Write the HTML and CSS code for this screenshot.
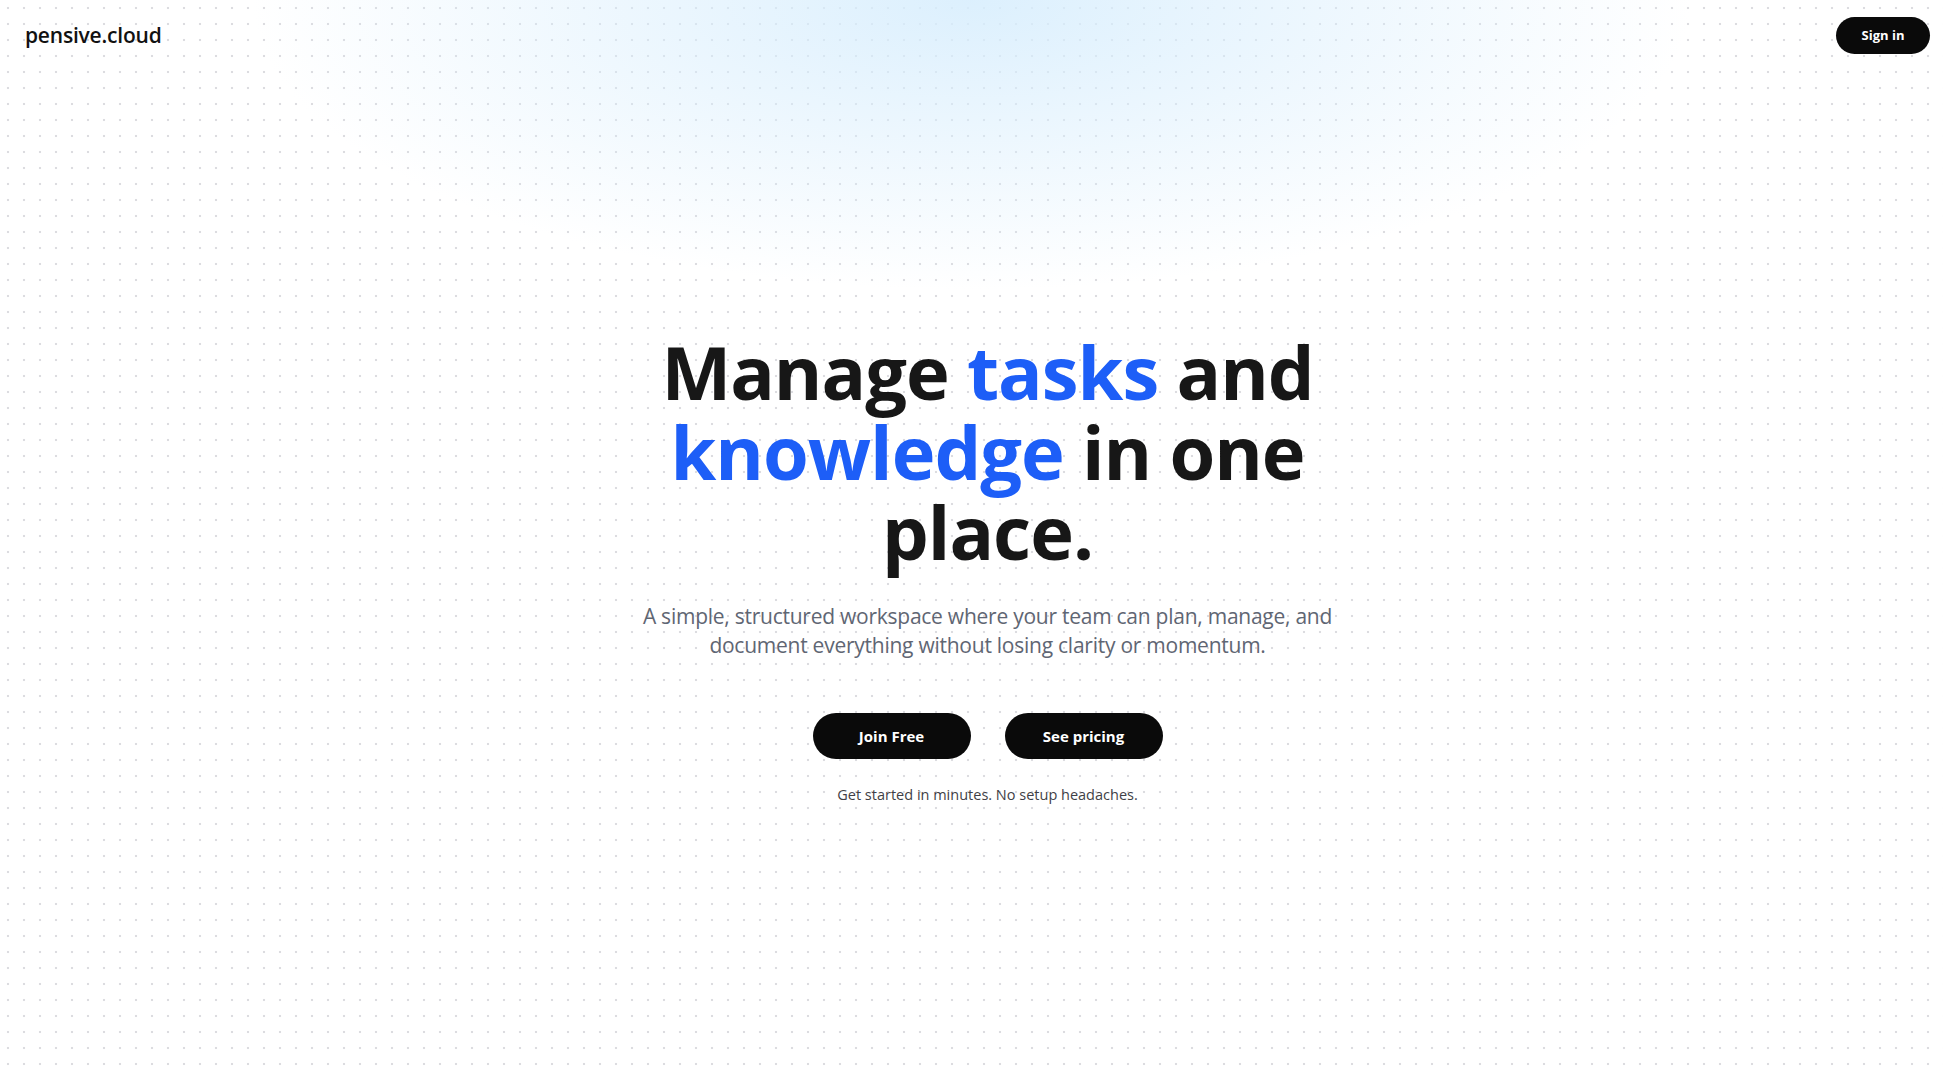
FILE: index.html
```html
<!DOCTYPE html>
<html lang="en">
<head>
<meta charset="utf-8">
<title>pensive.cloud</title>
<link rel="stylesheet" href="styles.css">
</head>
<body>
<div class="page">
  <header class="nav">
    <a class="logo" href="#">pensive.cloud</a>
    <a class="btn btn-sm" href="#">Sign in</a>
  </header>
  <main class="hero">
    <h1 class="title">Manage <span class="accent">tasks</span> and<br><span class="accent">knowledge</span> in one<br>place.</h1>
    <p class="lead">A simple, structured workspace where your team can plan, manage, and document everything without losing clarity or momentum.</p>
    <div class="actions">
      <a class="btn btn-lg" href="#">Join Free</a>
      <a class="btn btn-lg" href="#">See pricing</a>
    </div>
    <p class="note">Get started in minutes. No setup headaches.</p>
  </main>
</div>
</body>
</html>
```
FILE: styles.css
```css
html, body {
  margin: 0;
  padding: 0;
  height: 100%;
}
body {
  font-family: "Open Sans", "Noto Sans", sans-serif;
  color: #171717;
  background-color: #ffffff;
  background-image:
    radial-gradient(ellipse 720px 290px at 50% 0, rgba(214, 237, 253, 0.85), rgba(214, 237, 253, 0) 100%),
    radial-gradient(circle at 8px 8px, #dcdce0 1px, rgba(255,255,255,0) 1.6px);
  background-size: 100% 100%, 16px 16px;
  background-repeat: no-repeat, repeat;
  min-height: 100vh;
}
.page {
  display: flex;
  flex-direction: column;
  min-height: 100vh;
}
.nav {
  display: flex;
  align-items: center;
  justify-content: space-between;
  height: 70px;
  padding: 0 13px 0 25px;
}
.logo {
  font-size: 21px;
  font-weight: 600;
  color: #111;
  text-decoration: none;
  letter-spacing: -0.2px;
}
.btn {
  display: inline-flex;
  align-items: center;
  justify-content: center;
  background: #0a0a0a;
  color: #fff;
  text-decoration: none;
  font-weight: 700;
  border-radius: 999px;
}
.btn-sm {
  width: 94px;
  height: 37px;
  font-size: 13px;
}
.hero {
  display: flex;
  flex-direction: column;
  align-items: center;
  text-align: center;
  padding: 262px 0 0 32px;
}
.title {
  margin: 0;
  font-size: 74px;
  line-height: 80px;
  font-weight: 700;
  letter-spacing: -1px;
  color: #171717;
}
.accent {
  color: #1d5ef7;
}
.lead {
  margin: 30px 0 0;
  max-width: 720px;
  font-size: 21px;
  line-height: 29px;
  letter-spacing: -0.25px;
  color: #5f6673;
}
.actions {
  display: flex;
  gap: 34px;
  margin-top: 53px;
}
.btn-lg {
  width: 158px;
  height: 46px;
  font-size: 15px;
}
.note {
  margin: 26px 0 0;
  font-size: 14.5px;
  color: #3f3f46;
}
```
